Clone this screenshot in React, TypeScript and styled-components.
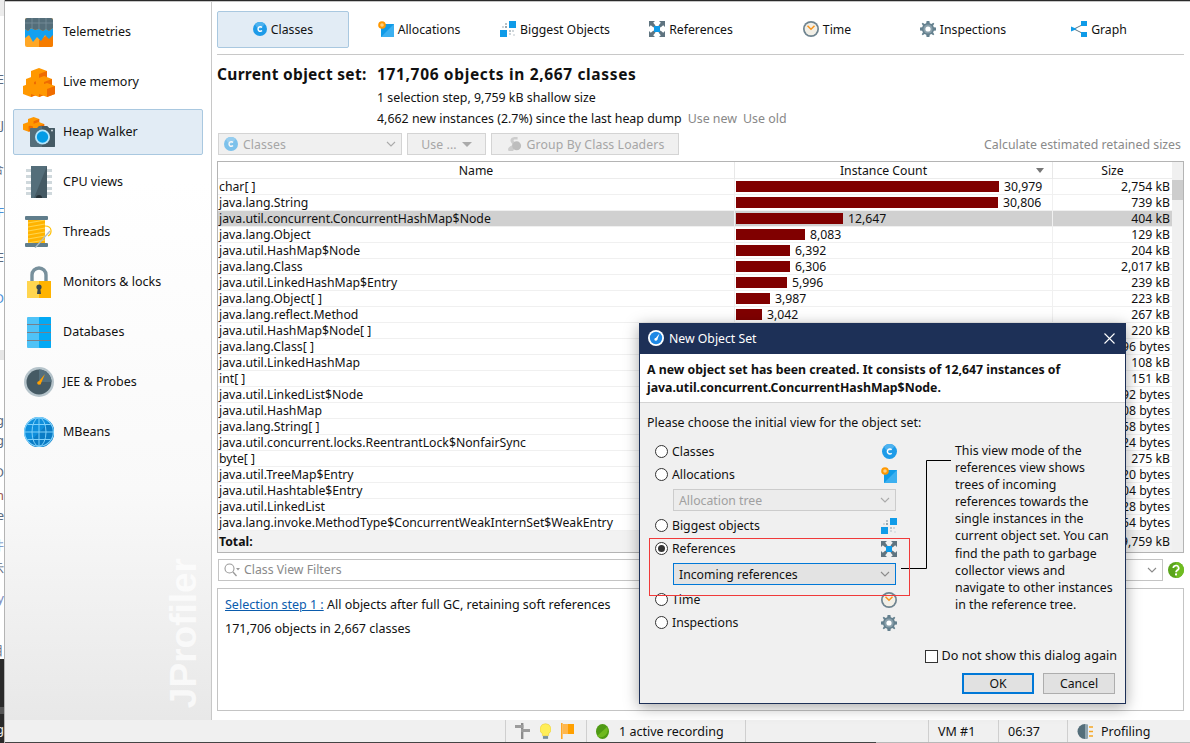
import React from "react";
import styled, { createGlobalStyle } from "styled-components";

const GlobalStyle = createGlobalStyle`
  html, body { margin: 0; padding: 0; background: #fff; }
  body { font-family: "Noto Sans", "Open Sans", sans-serif; font-size: 12.25px; color: #111; overflow: hidden; }
  * { box-sizing: border-box; }
`;

const Page = styled.div`
  position: relative;
  width: 1190px;
  height: 743px;
  display: flex;
  overflow: hidden;
  background: #2a2a2a;
`;

const DesktopEdge = styled.div`
  width: 5px;
  height: 743px;
  flex: none;
  overflow: hidden;
  background: linear-gradient(#ececec 0 16px, #fff 16px 350px, #e6e6e6 350px 360px, #fff 360px 659px, #2a2a2a 659px 707px, #555 707px 714px, #2a2a2a 714px);
  border-right: 1px solid #b4b4b4;
`;

const EdgeGlyph = styled.div<{ $top: number; $color?: string }>`
  height: 0;
  position: relative;
  top: ${(p) => p.$top}px;
  direction: rtl;
  white-space: nowrap;
  font-size: 13px;
  line-height: 0;
  color: ${(p) => p.$color || "#5a6a80"};
`;

const Window = styled.div`
  flex: 1;
  min-width: 0;
  display: flex;
  flex-direction: column;
  margin-top: 1px;
  border-top: 1px solid #c6c6c6;
  background: #fff;
`;

const Main = styled.div`
  flex: 1;
  min-height: 0;
  display: flex;
`;

const Sidebar = styled.nav`
  position: relative;
  width: 207px;
  flex: none;
  padding: 7px 8px 0 8px;
  display: flex;
  flex-direction: column;
  gap: 4px;
  border-right: 1px solid #c8c8c8;
  background: linear-gradient(#fff 0, #fff 25%, #f9f9f9 68%, #e8e8e8 100%);
`;

const NavItem = styled.div<{ $active?: boolean }>`
  height: 46px;
  flex: none;
  display: flex;
  align-items: center;
  border: 1px solid ${(p) => (p.$active ? "#a9c8e0" : "transparent")};
  border-radius: 2px;
  background: ${(p) => (p.$active ? "#e2ecf5" : "transparent")};
  font-size: 12.5px;
`;

const NavIconBox = styled.span`
  width: 49px;
  flex: none;
  display: flex;
  justify-content: center;
`;

const NavLabel = styled.span`
  padding-bottom: 2px;
`;

const Watermark = styled.div`
  position: absolute;
  right: 8px;
  bottom: 12px;
  writing-mode: vertical-rl;
  transform: rotate(180deg);
  font-family: "Liberation Sans", sans-serif;
  font-weight: 700;
  font-size: 37px;
  line-height: 38px;
  color: #fff;
  opacity: 0.7;
`;

const Content = styled.main`
  flex: 1;
  min-width: 0;
  display: flex;
  flex-direction: column;
  padding: 9px 6px 9px 5px;
`;

const TabBar = styled.div`
  display: grid;
  grid-template-columns: repeat(7, 132px);
  gap: 4px;
  padding-bottom: 6px;
  border-bottom: 1px solid #c8c8c8;
`;

const Tab = styled.div<{ $active?: boolean }>`
  height: 37px;
  display: flex;
  align-items: center;
  justify-content: center;
  gap: 4px;
  padding-bottom: 1px;
  border: 1px solid ${(p) => (p.$active ? "#a9c8e0" : "transparent")};
  border-radius: 2px;
  background: ${(p) => (p.$active ? "#e2ecf5" : "transparent")};
`;

const Summary = styled.div`
  margin-top: 9px;
  display: grid;
  grid-template-columns: 160px 1fr;
`;

const SummaryHead = styled.div<{ $spacing: number }>`
  height: 23px;
  line-height: 20px;
  font-size: 15.5px;
  letter-spacing: ${(p) => p.$spacing}px;
  font-weight: 700;
  white-space: nowrap;
`;

const SummaryLine = styled.div`
  grid-column: 2;
  height: 21px;
  line-height: 21px;
  font-size: 12.4px;
  white-space: nowrap;
`;

const MutedLink = styled.span`
  color: #888;
  margin-left: 6px;
`;

const Toolbar = styled.div`
  margin-top: 4px;
  height: 22px;
  padding-left: 1px;
  display: flex;
  align-items: stretch;
  gap: 5px;
`;

const DisabledControl = styled.div<{ $width: number; $centered?: boolean }>`
  width: ${(p) => p.$width}px;
  display: flex;
  align-items: center;
  justify-content: ${(p) => (p.$centered ? "center" : "flex-start")};
  gap: 5px;
  padding: 0 5px;
  border: 1px solid #d4d4d4;
  background: #f0f0f0;
  color: #a6a6a6;
  letter-spacing: 0.1px;
`;

const ChevronSlot = styled.span`
  margin-left: auto;
  display: flex;
`;

const RetainedLink = styled.span`
  margin-left: auto;
  margin-right: 3px;
  align-self: center;
  font-size: 12.35px;
  color: #8a8a8a;
`;

const TableFrame = styled.div`
  margin-top: 6px;
  display: flex;
  border: 1px solid #b4b4b4;
`;

const TableBody = styled.div`
  flex: 1;
  min-width: 0;
`;

const HeaderRow = styled.div`
  height: 17px;
  display: grid;
  grid-template-columns: 516px 318px 1fr;
  border-bottom: 1px solid #ececec;
`;

const HeaderCell = styled.div<{ $sorted?: boolean }>`
  position: relative;
  line-height: 17px;
  text-align: center;
  padding-right: ${(p) => (p.$sorted ? 20 : 0)}px;
  & + & { border-left: 1px solid #e8e8e8; }
`;

const SortArrow = styled.span`
  position: absolute;
  right: 8px;
  top: 6px;
  border-left: 4px solid transparent;
  border-right: 4px solid transparent;
  border-top: 5px solid #777;
`;

const Row = styled.div<{ $selected?: boolean }>`
  height: 16px;
  display: grid;
  grid-template-columns: 516px 318px 1fr;
  border-bottom: 1px solid #f0f0f0;
  background: ${(p) => (p.$selected ? "#d0d0d0" : "#fff")};
  line-height: 15px;
  white-space: nowrap;
`;

const NameCell = styled.div`
  padding-left: 1px;
  overflow: hidden;
`;

const CountCell = styled.div`
  display: flex;
  align-items: center;
  gap: 5px;
  padding-left: 1px;
  border-left: 1px solid #f0f0f0;
`;

const Bar = styled.div`
  height: 11px;
  background: #800000;
`;

const SizeCell = styled.div`
  text-align: right;
  padding-right: 2px;
  border-left: 1px solid #f0f0f0;
`;

const TotalRow = styled.div`
  height: 21px;
  padding-left: 1px;
  display: flex;
  justify-content: space-between;
  padding-right: 2px;
  background: #f2f2f2;
  line-height: 22px;
  font-weight: 700;
`;

const TotalSize = styled.span`
  font-weight: 400;
`;

const Scrollbar = styled.div`
  width: 11px;
  flex: none;
  background: #f0f0f0;
`;

const ScrollThumb = styled.div`
  margin-top: 18px;
  height: 20px;
  background: #cdcdcd;
`;

const FilterRow = styled.div`
  margin-top: 6px;
  display: flex;
  align-items: center;
`;

const FilterField = styled.div`
  margin-left: 1px;
  width: 945px;
  height: 22px;
  display: flex;
  align-items: center;
  padding: 0 5px 1px;
  gap: 4px;
  border: 1px solid #c4c4c4;
  color: #8a8a8a;
`;

const HelpSlot = styled.span`
  margin-left: 5px;
  display: flex;
`;

const Details = styled.section`
  flex: 1;
  margin-top: 7px;
  padding: 6px 7px;
  border: 1px solid #c4c4c4;
  font-size: 12.5px;
`;

const DetailsLine = styled.div`
  line-height: 20px;
  margin-bottom: 4px;
`;

const StepLink = styled.span`
  color: #0b5cad;
  text-decoration: underline;
`;

const StatusBar = styled.footer`
  height: 22px;
  flex: none;
  display: flex;
  background: #f0f0f0;
  font-size: 12.5px;
`;

const StatusCell = styled.div<{ $width: number; $gap?: number }>`
  width: ${(p) => p.$width}px;
  display: flex;
  align-items: center;
  padding-left: 9px;
  gap: ${(p) => p.$gap || 6}px;
  border-left: 1px solid #cfcfcf;
`;

const StatusSpacer = styled.div`
  flex: 1;
`;

const BottomEdge = styled.div`
  height: 1px;
  flex: none;
  background: linear-gradient(90deg, #444 0 871px, #b8b8b8 871px);
`;

const Dialog = styled.div`
  position: absolute;
  left: 639px;
  top: 323px;
  width: 487px;
  height: 381px;
  display: flex;
  flex-direction: column;
  border: 1px solid #1d3057;
  border-top: 0;
  background: #f0f0f0;
  box-shadow: 0 3px 14px rgba(0, 0, 0, 0.35);
`;

const TitleBar = styled.div`
  height: 31px;
  flex: none;
  margin: 0 -1px;
  display: flex;
  align-items: center;
  padding: 0 11px 1px 9px;
  gap: 5px;
  background: #1d3057;
  color: #fff;
`;

const CloseSlot = styled.span`
  margin-left: auto;
  display: flex;
`;

const DialogIntro = styled.div`
  height: 49px;
  flex: none;
  padding: 7px 7px 0;
  border-bottom: 1px solid #d4d4d4;
  background: #fff;
  font-weight: 700;
  font-size: 12.3px;
  line-height: 18px;
  white-space: nowrap;
`;

const DialogBody = styled.div`
  position: relative;
  flex: 1;
  min-height: 0;
  display: flex;
  flex-direction: column;
  padding: 11px 9px 9px;
`;

const Prompt = styled.div`
  margin-left: -2px;
  font-size: 12.4px;
  line-height: 18px;
`;

const Columns = styled.div`
  margin-top: 8px;
  display: flex;
`;

const Options = styled.div`
  width: 261px;
  flex: none;
`;

const OptionRow = styled.div<{ $height?: number }>`
  height: ${(p) => p.$height || 23}px;
  display: flex;
  align-items: center;
  padding: 0 13px 0 6px;
`;

const Radio = styled.span<{ $checked?: boolean }>`
  width: 13px;
  height: 13px;
  flex: none;
  margin-right: 4px;
  display: flex;
  align-items: center;
  justify-content: center;
  border: 1px solid #333;
  border-radius: 50%;
  background: #fff;
  &::after {
    content: "";
    width: 7px;
    height: 7px;
    border-radius: 50%;
    background: ${(p) => (p.$checked ? "#333" : "transparent")};
  }
`;

const OptionIcon = styled.span`
  margin-left: auto;
  display: flex;
`;

const Select = styled.div<{ $focused?: boolean }>`
  height: 22px;
  margin: 3px 14px 3px 24px;
  display: flex;
  align-items: center;
  padding: 0 5px;
  border: 1px solid ${(p) => (p.$focused ? "#0078d7" : "#cccccc")};
  background: ${(p) => (p.$focused ? "#e3e3e3" : "#ececec")};
  color: ${(p) => (p.$focused ? "#111" : "#a0a0a0")};
`;

const RedBox = styled.div`
  position: relative;
  height: 58px;
  margin-top: 1px;
  margin-bottom: -8px;
  border: 1px solid #f03a3a;
  z-index: 1;
  pointer-events: none;
`;

const RedBoxRow = styled(OptionRow)`
  padding: 0 12px 0 5px;
`;

const RedBoxSelect = styled(Select)`
  margin: 5px 13px 0 23px;
`;

const Description = styled.div`
  margin-left: 45px;
  margin-top: 2px;
  white-space: nowrap;
  font-size: 12.35px;
  line-height: 17.1px;
`;

const Connector = styled.svg`
  position: absolute;
  left: 261px;
  top: 57px;
`;

const CheckRow = styled.div`
  margin-top: auto;
  margin-right: -1px;
  display: flex;
  justify-content: flex-end;
  align-items: center;
  gap: 4px;
  font-size: 12.6px;
  line-height: 18px;
`;

const Checkbox = styled.span`
  width: 13px;
  height: 13px;
  border: 1px solid #333;
  background: #fff;
`;

const ButtonRow = styled.div`
  margin-top: 8px;
  padding-right: 1px;
  display: flex;
  justify-content: flex-end;
  gap: 9px;
`;

const Button = styled.div<{ $primary?: boolean }>`
  width: 72px;
  height: 21px;
  display: flex;
  align-items: center;
  justify-content: center;
  border: ${(p) => (p.$primary ? "2px solid #0078d7" : "1px solid #adadad")};
  background: #e1e1e1;
`;

// ---- icons ----

const ClassIcon = ({ size = 14, faded }: { size?: number; faded?: boolean }) => (
  <svg width={size} height={size} viewBox="0 0 14 14" opacity={faded ? 0.55 : 1}>
    <circle cx="7" cy="7" r="7" fill="#1e9be8" />
    <path d="M7 7A7 7 0 0 1 2 2 7 7 0 0 1 12 2Z" fill="#4db2ef" />
    <path d="M9 5.4A2.3 2.3 0 1 0 9 8.6" fill="none" stroke="#fff" strokeWidth="1.4" />
  </svg>
);

const AllocIcon = () => (
  <svg width="16" height="16" viewBox="0 0 16 16">
    <rect x="3" y="3" width="13" height="13" fill="#0f9be8" />
    <path d="M16 3V16H3Z" fill="#3cb0f0" />
    <circle cx="4" cy="4" r="3.8" fill="#ff9800" />
    <circle cx="4" cy="4" r="1.8" fill="#ffd180" />
  </svg>
);

const BiggestIcon = () => (
  <svg width="16" height="16" viewBox="0 0 16 16">
    <rect x="9" y="0" width="7" height="7" fill="#0f9be8" />
    <rect x="0" y="9" width="7" height="7" fill="#0f9be8" />
    <rect x="5" y="2" width="2" height="2" fill="#b8c2c8" />
    <rect x="2" y="5" width="2" height="2" fill="#cfd6da" />
    <rect x="5" y="5" width="2" height="2" fill="#9aa6ad" />
    <rect x="9" y="9" width="2" height="2" fill="#b8c2c8" />
    <rect x="12" y="9" width="2" height="2" fill="#cfd6da" />
    <rect x="9" y="12" width="2" height="2" fill="#cfd6da" />
    <rect x="13" y="13" width="2" height="2" fill="#dde2e5" />
  </svg>
);

const ReferencesIcon = () => (
  <svg width="16" height="16" viewBox="0 0 16 16">
    <g fill="#5f7480">
      <path d="M0 0H6L4.2 1.8 6.5 4.5 4.5 6.5 1.8 4.2 0 6Z" />
      <path d="M16 0V6L14.2 4.2 11.5 6.5 9.5 4.5 11.8 1.8 10 0Z" />
      <path d="M0 16V10L1.8 11.8 4.5 9.5 6.5 11.5 4.2 14.2 6 16Z" />
      <path d="M16 16H10L11.8 14.2 9.5 11.5 11.5 9.5 14.2 11.8 16 10Z" />
    </g>
    <rect x="5" y="5" width="6" height="6" fill="#0f9be8" />
  </svg>
);

const TimeIcon = () => (
  <svg width="16" height="16" viewBox="0 0 16 16">
    <circle cx="8" cy="8" r="8" fill="#6f8490" />
    <circle cx="8" cy="8" r="6.3" fill="#f2efe6" />
    <path d="M4.5 4.8 8 8.3 11.5 4.8" fill="none" stroke="#f7941d" strokeWidth="1.5" />
  </svg>
);

const GearIcon = () => (
  <svg width="16" height="16" viewBox="0 0 16 16">
    <path
      d="M6.6 0H9.4L9.8 2.2 11.4 2.9 13.3 1.7 14.3 2.7 13.1 4.6 13.8 6.2 16 6.6V9.4L13.8 9.8 13.1 11.4 14.3 13.3 13.3 14.3 11.4 13.1 9.8 13.8 9.4 16H6.6L6.2 13.8 4.6 13.1 2.7 14.3 1.7 13.3 2.9 11.4 2.2 9.8 0 9.4V6.6L2.2 6.2 2.9 4.6 1.7 2.7 2.7 1.7 4.6 2.9 6.2 2.2Z"
      fill="#64808e"
    />
    <circle cx="8" cy="8" r="4.6" fill="#8aa0ab" />
    <circle cx="8" cy="8" r="2.6" fill="#fff" />
  </svg>
);

const GraphIcon = () => (
  <svg width="16" height="16" viewBox="0 0 16 16">
    <path d="M3 8 13 3M3 8 13 13" stroke="#5f7480" strokeWidth="1" fill="none" />
    <path d="M0 5.5 6 8 0 10.5Z" fill="#0f9be8" />
    <rect x="10" y="0" width="6" height="5" fill="#0f9be8" />
    <rect x="10" y="11" width="6" height="5" fill="#0f9be8" />
  </svg>
);

const Chevron = ({ color = "#8a8a8a" }: { color?: string }) => (
  <svg width="10" height="6" viewBox="0 0 10 6">
    <path d="M1 1 5 5 9 1" fill="none" stroke={color} strokeWidth="1.1" />
  </svg>
);

const TelemetriesIcon = () => (
  <svg width="28" height="29" viewBox="0 0 28 29">
    <rect width="28" height="29" rx="2" fill="#ffa726" />
    <path d="M14 29H26a2 2 0 0 0 2-2V14L14 22Z" fill="#f57c00" />
    <path d="M0 11 3 13 6 10 10 12 14 11 18 13 21 11 24 13 28 10V17L24 21 20 17 16 23 12 19 8 24 4 17 0 20Z" fill="#12a0f0" />
    <path d="M0 2a2 2 0 0 1 2-2H26a2 2 0 0 1 2 2V10L24 13 21 11 18 13 14 11 10 12 6 10 3 13 0 11Z" fill="#546e7a" />
    <path d="M0 5H28M7 0V11M14 0V11M21 0V11" stroke="#78909c" strokeWidth="0.8" />
  </svg>
);

const cube = (x: number, y: number, s = 1) => {
  const w = 8 * s;
  return (
    <g key={`${x}-${y}`}>
      <path d={`M${x} ${y + 3 * s}L${x + w} ${y}L${x + 2 * w} ${y + 3 * s}V${y + 11 * s}L${x + w} ${y + 14 * s}L${x} ${y + 11 * s}Z`} fill="#ff9800" />
      <path d={`M${x + w} ${y + 6 * s}L${x + 2 * w} ${y + 3 * s}V${y + 11 * s}L${x + w} ${y + 14 * s}Z`} fill="#ef6c00" />
    </g>
  );
};

const LiveMemoryIcon = () => (
  <svg width="32" height="29" viewBox="0 0 32 29">
    {cube(8, 0)}
    {cube(3, 8)}
    {cube(13, 8)}
    {cube(0, 15)}
    {cube(8, 15)}
    {cube(16, 15)}
  </svg>
);

const HeapWalkerIcon = () => (
  <svg width="32" height="30" viewBox="0 0 32 30">
    {cube(0, 5, 0.7)}
    {cube(5, 0, 0.7)}
    {cube(10, 5, 0.7)}
    <path d="M7 12a1 1 0 0 1 1-1H14L16 9H24L26 11H31a1 1 0 0 1 1 1V29a1 1 0 0 1-1 1H8a1 1 0 0 1-1-1Z" fill="#546e7a" />
    <path d="M19 9H24L26 11H31a1 1 0 0 1 1 1V29a1 1 0 0 1-1 1H19Z" fill="#455a64" />
    <circle cx="19.5" cy="20" r="7.5" fill="#b3e5fc" />
    <circle cx="19.5" cy="20" r="5.7" fill="#039be5" />
    <circle cx="29" cy="13.5" r="1" fill="#cfd8dc" />
  </svg>
);

const CpuIcon = () => (
  <svg width="26" height="32" viewBox="0 0 26 32">
    <g fill="#cfd8dc">
      {[3, 9, 15, 21, 26].map((y) => (
        <React.Fragment key={y}>
          <rect x="0" y={y} width="5" height="3" />
          <rect x="21" y={y} width="5" height="3" />
        </React.Fragment>
      ))}
    </g>
    <rect x="5" width="16" height="32" fill="#546e7a" />
    <path d="M21 0V32H8Z" fill="#455a64" />
    <path d="M10 32a3 3 0 0 1 6 0Z" fill="#263238" />
  </svg>
);

const ThreadsIcon = () => (
  <svg width="29" height="32" viewBox="0 0 29 32">
    <rect x="4" y="3" width="17" height="26" fill="#ffb300" />
    <path d="M4 7 21 4M4 11 21 8M4 15 21 12M4 19 21 16M4 23 21 20M4 27 21 24" stroke="#ffd54f" strokeWidth="1.2" />
    <rect x="1" y="0" width="23" height="4" rx="1" fill="#607d8b" />
    <rect x="1" y="27" width="23" height="4" rx="1" fill="#607d8b" />
    <path d="M11 32 26 15" stroke="#b0bec5" strokeWidth="1.2" />
    <path d="M21 10C29 10 28 18 24 20" stroke="#ffc107" strokeWidth="1.2" fill="none" />
  </svg>
);

const LockIcon = () => (
  <svg width="24" height="32" viewBox="0 0 24 32">
    <path d="M5 15V9a7 7 0 0 1 14 0V15" fill="none" stroke="#78909c" strokeWidth="3.4" />
    <rect y="15" width="24" height="17" fill="#ffd54f" />
    <rect x="12" y="15" width="12" height="17" fill="#ffb300" />
    <circle cx="12" cy="21" r="2.6" fill="#37474f" />
    <path d="M10.8 22H13.2L14 28H10Z" fill="#37474f" />
  </svg>
);

const DatabaseIcon = () => (
  <svg width="24" height="31" viewBox="0 0 24 31">
    <rect width="24" height="31" rx="1" fill="#4fc3f7" />
    <rect x="12" width="12" height="31" rx="1" fill="#03a9f4" />
    <path d="M0 7.5H24M0 15.5H24M0 23.5H24" stroke="#78808a" strokeWidth="1.2" />
  </svg>
);

const GaugeIcon = () => (
  <svg width="30" height="30" viewBox="0 0 30 30">
    <circle cx="15" cy="15" r="15" fill="#b6c4cb" />
    <circle cx="15" cy="15" r="12.5" fill="#455a64" />
    <path d="M15 15 15 2.5A12.5 12.5 0 0 1 27.5 15Z" fill="#55707d" />
    <path d="M13.5 16 21 7 16.5 17.5Z" fill="#ffa000" />
    <circle cx="15" cy="16" r="1.8" fill="#ffa000" />
  </svg>
);

const GlobeIcon = () => (
  <svg width="30" height="30" viewBox="0 0 30 30">
    <circle cx="15" cy="15" r="15" fill="#0f8fdc" />
    <path d="M26 4.5A15 15 0 0 1 4.5 26Z" fill="#0a7cc5" />
    <g fill="none" stroke="#7fd0fa" strokeWidth="1">
      <circle cx="15" cy="15" r="14.4" strokeWidth="1.2" />
      <ellipse cx="15" cy="15" rx="7" ry="14.4" />
      <path d="M15 0V30M1 15H29M3.5 7.5H26.5M3.5 22.5H26.5" />
    </g>
  </svg>
);

const SearchIcon = () => (
  <svg width="16" height="14" viewBox="0 0 16 14">
    <circle cx="5.5" cy="5.5" r="4.5" fill="none" stroke="#9a9a9a" strokeWidth="1.1" />
    <path d="M9 9 12.5 13" stroke="#9a9a9a" strokeWidth="1.3" />
    <path d="M12 5H16L14 7.5Z" fill="#9a9a9a" />
  </svg>
);

const HelpIcon = () => (
  <svg width="16" height="16" viewBox="0 0 16 16">
    <circle cx="8" cy="8" r="8" fill="#5aa51a" />
    <path d="M8 0A8 8 0 0 1 8 16Z" fill="#6fbc20" />
    <path d="M5.3 6a2.7 2.5 0 1 1 4 2.2C8.4 8.8 8 9.2 8 10.3" fill="none" stroke="#fff" strokeWidth="1.7" />
    <rect x="7" y="11.4" width="2" height="2" fill="#fff" />
  </svg>
);

const TitleLogo = () => (
  <svg width="16" height="16" viewBox="0 0 16 16">
    <circle cx="8" cy="8" r="8" fill="#fff" />
    <circle cx="8" cy="8" r="6.2" fill="#1e88e5" />
    <path d="M7 9 11.5 3.5 9.2 10Z" fill="#fff" />
    <circle cx="7.8" cy="9.4" r="1.4" fill="#fff" />
  </svg>
);

const CloseIcon = () => (
  <svg width="11" height="11" viewBox="0 0 11 11">
    <path d="M0.5 0.5 10.5 10.5M10.5 0.5 0.5 10.5" stroke="#fff" strokeWidth="1.1" />
  </svg>
);

const ClassLoaderIcon = () => (
  <svg width="16" height="16" viewBox="0 0 18 16">
    <path d="M3 16C1 13 4 11 6 10 9 8 5 7 5 4 5 1 8 0 10 0H13V3H10C8 3 8 5 10 6 14 8 12 12 9 14L8 16Z" fill="#cdcdcd" />
    <circle cx="12" cy="10" r="5" fill="#bdbdbd" />
  </svg>
);

const SignpostIcon = () => (
  <svg width="15" height="16" viewBox="0 0 15 16">
    <rect x="6" y="0" width="2.4" height="16" fill="#8c8c8c" />
    <path d="M0 2H8.4V5H0ZM6 6H15V9H6Z" fill="#9c9c9c" />
  </svg>
);

const BulbIcon = () => (
  <svg width="11" height="17" viewBox="0 0 12 17">
    <path d="M6 0a6 6 0 0 1 3.4 11V13H2.6V11A6 6 0 0 1 6 0Z" fill="#ffee58" stroke="#e8c93a" strokeWidth="0.6" />
    <rect x="3.2" y="13.5" width="5.6" height="3" fill="#78909c" />
  </svg>
);

const FlagIcon = () => (
  <svg width="13" height="16" viewBox="0 0 13 16">
    <rect width="1.6" height="16" fill="#ffa726" />
    <path d="M1.6 1H13V11H1.6Z" fill="#ffb74d" />
    <path d="M7 1H13V11H7Z" fill="#ffa000" />
  </svg>
);

const RecordingDot = () => (
  <svg width="13" height="15" viewBox="0 0 13 15">
    <ellipse cx="6.5" cy="7.5" rx="6.5" ry="7.5" fill="#4f9a14" />
    <path d="M1 12 11 3A7 7 0 0 1 1 12Z" fill="#6fb91f" />
  </svg>
);

const ProfilingIcon = () => (
  <svg width="17" height="15" viewBox="0 0 17 15">
    <path d="M8 0A7.5 7.5 0 0 0 8 15Z" fill="#546e7a" />
    <path d="M8 0A7.5 7.5 0 0 1 11 .6V14.4A7.5 7.5 0 0 1 8 15Z" fill="#90a4ae" />
    <path d="M12 3H16M12 7.5H16M12 12H16" stroke="#f5a623" strokeWidth="1.6" />
  </svg>
);

// ---- data ----

type TableEntry = { name: string; count?: number; size: string };

const MAX_COUNT = 30979;
const MAX_BAR = 263;

const entries: TableEntry[] = [
  { name: "char[ ]", count: 30979, size: "2,754 kB" },
  { name: "java.lang.String", count: 30806, size: "739 kB" },
  { name: "java.util.concurrent.ConcurrentHashMap$Node", count: 12647, size: "404 kB" },
  { name: "java.lang.Object", count: 8083, size: "129 kB" },
  { name: "java.util.HashMap$Node", count: 6392, size: "204 kB" },
  { name: "java.lang.Class", count: 6306, size: "2,017 kB" },
  { name: "java.util.LinkedHashMap$Entry", count: 5996, size: "239 kB" },
  { name: "java.lang.Object[ ]", count: 3987, size: "223 kB" },
  { name: "java.lang.reflect.Method", count: 3042, size: "267 kB" },
  { name: "java.util.HashMap$Node[ ]", size: "220 kB" },
  { name: "java.lang.Class[ ]", size: "96 bytes" },
  { name: "java.util.LinkedHashMap", size: "108 kB" },
  { name: "int[ ]", size: "151 kB" },
  { name: "java.util.LinkedList$Node", size: "92 bytes" },
  { name: "java.util.HashMap", size: "08 bytes" },
  { name: "java.lang.String[ ]", size: "58 bytes" },
  { name: "java.util.concurrent.locks.ReentrantLock$NonfairSync", size: "24 bytes" },
  { name: "byte[ ]", size: "275 kB" },
  { name: "java.util.TreeMap$Entry", size: "20 bytes" },
  { name: "java.util.Hashtable$Entry", size: "04 bytes" },
  { name: "java.util.LinkedList", size: "28 bytes" },
  { name: "java.lang.invoke.MethodType$ConcurrentWeakInternSet$WeakEntry", size: "54 bytes" },
];

const navItems = [
  { label: "Telemetries", icon: <TelemetriesIcon /> },
  { label: "Live memory", icon: <LiveMemoryIcon /> },
  { label: "Heap Walker", icon: <HeapWalkerIcon />, active: true },
  { label: "CPU views", icon: <CpuIcon /> },
  { label: "Threads", icon: <ThreadsIcon /> },
  { label: "Monitors & locks", icon: <LockIcon /> },
  { label: "Databases", icon: <DatabaseIcon /> },
  { label: "JEE & Probes", icon: <GaugeIcon /> },
  { label: "MBeans", icon: <GlobeIcon /> },
];

const tabs = [
  { label: "Classes", icon: <ClassIcon />, active: true },
  { label: "Allocations", icon: <AllocIcon /> },
  { label: "Biggest Objects", icon: <BiggestIcon /> },
  { label: "References", icon: <ReferencesIcon /> },
  { label: "Time", icon: <TimeIcon /> },
  { label: "Inspections", icon: <GearIcon /> },
  { label: "Graph", icon: <GraphIcon /> },
];

const descriptionLines = [
  "This view mode of the",
  "references view shows",
  "trees of incoming",
  "references towards the",
  "single instances in the",
  "current object set. You can",
  "find the path to garbage",
  "collector views and",
  "navigate to other instances",
  "in the reference tree.",
];

const edgeGlyphs = [
  { top: 79, text: "E" },
  { top: 125, text: "IJ" },
  { top: 168, text: "合" },
  { top: 212, text: "F", color: "#4a90d9" },
  { top: 257, text: "E" },
  { top: 298, text: "D", color: "#4a90d9" },
  { top: 420, text: "g" },
  { top: 440, text: "g" },
  { top: 472, text: "D" },
  { top: 495, text: "n", color: "#a05a50" },
  { top: 515, text: "e" },
  { top: 545, text: "井", color: "#6a8ac0" },
  { top: 568, text: "示" },
  { top: 598, text: "y", color: "#7a8ac0" },
  { top: 650, text: "目" },
  { top: 729, text: "g", color: "#eee" },
];

const App = () => {
  return (
    <>
      <GlobalStyle />
      <Page>
        <DesktopEdge>
          {edgeGlyphs.map((g, i) => (
            <EdgeGlyph key={i} $top={g.top} $color={g.color}>
              {g.text}
            </EdgeGlyph>
          ))}
        </DesktopEdge>
        <Window>
          <Main>
            <Sidebar>
              {navItems.map((item) => (
                <NavItem key={item.label} $active={item.active}>
                  <NavIconBox>{item.icon}</NavIconBox>
                  <NavLabel>{item.label}</NavLabel>
                </NavItem>
              ))}
              <Watermark>JProfiler</Watermark>
            </Sidebar>
            <Content>
              <TabBar>
                {tabs.map((t) => (
                  <Tab key={t.label} $active={t.active}>
                    {t.icon}
                    {t.label}
                  </Tab>
                ))}
              </TabBar>
              <Summary>
                <SummaryHead $spacing={0.3}>Current object set:</SummaryHead>
                <SummaryHead $spacing={0.65}>171,706 objects in 2,667 classes</SummaryHead>
                <SummaryLine>1 selection step, 9,759 kB shallow size</SummaryLine>
                <SummaryLine>
                  4,662 new instances (2.7%) since the last heap dump
                  <MutedLink>Use new</MutedLink>
                  <MutedLink>Use old</MutedLink>
                </SummaryLine>
              </Summary>
              <Toolbar>
                <DisabledControl $width={184}>
                  <ClassIcon faded />
                  Classes
                  <ChevronSlot>
                    <Chevron color="#aaa" />
                  </ChevronSlot>
                </DisabledControl>
                <DisabledControl $width={79} $centered>
                  Use ...
                  <svg width="10" height="5" viewBox="0 0 10 5">
                    <path d="M0 0H10L5 5Z" fill="#aaa" />
                  </svg>
                </DisabledControl>
                <DisabledControl $width={188} $centered>
                  <ClassLoaderIcon />
                  Group By Class Loaders
                </DisabledControl>
                <RetainedLink>Calculate estimated retained sizes</RetainedLink>
              </Toolbar>
              <TableFrame>
                <TableBody>
                  <HeaderRow>
                    <HeaderCell>Name</HeaderCell>
                    <HeaderCell $sorted>
                      Instance Count
                      <SortArrow />
                    </HeaderCell>
                    <HeaderCell>Size</HeaderCell>
                  </HeaderRow>
                  {entries.map((e) => (
                    <Row key={e.name} $selected={e.count === 12647}>
                      <NameCell>{e.name}</NameCell>
                      <CountCell>
                        {e.count !== undefined && (
                          <>
                            <Bar style={{ width: Math.round((e.count / MAX_COUNT) * MAX_BAR) }} />
                            {e.count.toLocaleString("en-US")}
                          </>
                        )}
                      </CountCell>
                      <SizeCell>{e.size}</SizeCell>
                    </Row>
                  ))}
                  <TotalRow>
                    Total:
                    <TotalSize>9,759 kB</TotalSize>
                  </TotalRow>
                </TableBody>
                <Scrollbar>
                  <ScrollThumb />
                </Scrollbar>
              </TableFrame>
              <FilterRow>
                <FilterField>
                  <SearchIcon />
                  Class View Filters
                  <ChevronSlot>
                    <Chevron />
                  </ChevronSlot>
                </FilterField>
                <HelpSlot>
                  <HelpIcon />
                </HelpSlot>
              </FilterRow>
              <Details>
                <DetailsLine>
                  <StepLink>Selection step 1 :</StepLink> All objects after full GC, retaining soft references
                </DetailsLine>
                <DetailsLine>171,706 objects in 2,667 classes</DetailsLine>
              </Details>
            </Content>
          </Main>
          <StatusBar>
            <StatusSpacer />
            <StatusCell $width={81} $gap={10}>
              <SignpostIcon />
              <BulbIcon />
              <FlagIcon />
            </StatusCell>
            <StatusCell $width={159} $gap={10}>
              <RecordingDot />1 active recording
            </StatusCell>
            <StatusCell $width={183} />
            <StatusCell $width={70}>VM #1</StatusCell>
            <StatusCell $width={69}>06:37</StatusCell>
            <StatusCell $width={123} $gap={7}>
              <ProfilingIcon />
              Profiling
            </StatusCell>
          </StatusBar>
          <BottomEdge />
        </Window>
        <Dialog>
          <TitleBar>
            <TitleLogo />
            New Object Set
            <CloseSlot>
              <CloseIcon />
            </CloseSlot>
          </TitleBar>
          <DialogIntro>
            A new object set has been created. It consists of 12,647 instances of
            <br />
            java.util.concurrent.ConcurrentHashMap$Node.
          </DialogIntro>
          <DialogBody>
            <Prompt>Please choose the initial view for the object set:</Prompt>
            <Columns>
              <Options>
                <OptionRow>
                  <Radio />
                  Classes
                  <OptionIcon>
                    <ClassIcon size={15} />
                  </OptionIcon>
                </OptionRow>
                <OptionRow>
                  <Radio />
                  Allocations
                  <OptionIcon>
                    <AllocIcon />
                  </OptionIcon>
                </OptionRow>
                <Select>
                  Allocation tree
                  <ChevronSlot>
                    <Chevron color="#aaa" />
                  </ChevronSlot>
                </Select>
                <OptionRow>
                  <Radio />
                  Biggest objects
                  <OptionIcon>
                    <BiggestIcon />
                  </OptionIcon>
                </OptionRow>
                <RedBox>
                  <RedBoxRow $height={19}>
                    <Radio $checked />
                    References
                    <OptionIcon>
                      <ReferencesIcon />
                    </OptionIcon>
                  </RedBoxRow>
                  <RedBoxSelect $focused>
                    Incoming references
                    <ChevronSlot>
                      <Chevron />
                    </ChevronSlot>
                  </RedBoxSelect>
                </RedBox>
                <OptionRow>
                  <Radio />
                  Time
                  <OptionIcon>
                    <TimeIcon />
                  </OptionIcon>
                </OptionRow>
                <OptionRow>
                  <Radio />
                  Inspections
                  <OptionIcon>
                    <GearIcon />
                  </OptionIcon>
                </OptionRow>
              </Options>
              <Description>
                {descriptionLines.map((line) => (
                  <div key={line}>{line}</div>
                ))}
              </Description>
            </Columns>
            <Connector width="52" height="112" viewBox="0 0 52 112">
              <path d="M0 108.5H25.5V0.5H50" fill="none" stroke="#000" strokeWidth="1" />
            </Connector>
            <CheckRow>
              <Checkbox />
              Do not show this dialog again
            </CheckRow>
            <ButtonRow>
              <Button $primary>OK</Button>
              <Button>Cancel</Button>
            </ButtonRow>
          </DialogBody>
        </Dialog>
      </Page>
    </>
  );
};

export default App;
